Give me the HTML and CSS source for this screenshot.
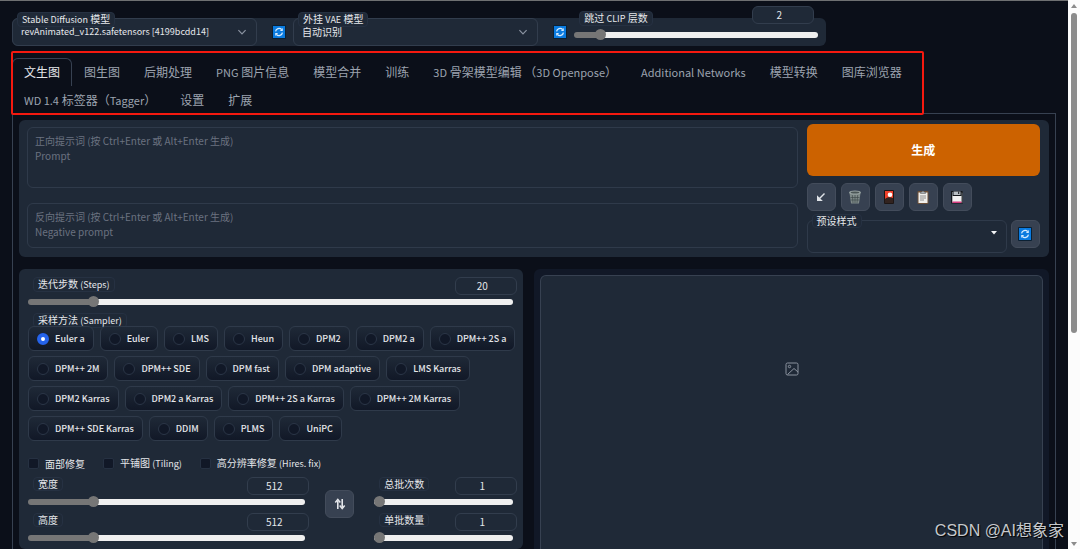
FILE: index.html
```
<!DOCTYPE html>
<html lang="zh-CN">
<head>
    <meta charset="UTF-8">
    <meta name="viewport" content="width=device-width, initial-scale=1.0">
    <link rel="stylesheet" href="styles.css">
    <title>Stable Diffusion</title>
</head>
<body>
    <svg class="defs" width="0" height="0">
        <symbol id="refresh" viewBox="0 0 14 14">
            <rect x="0" y="0" width="14" height="14" rx="1" fill="#0b2033"/>
            <rect x="1" y="1" width="12" height="12" fill="#0a7be0"/>
            <path d="M3.6 6.4a3.5 3.5 0 0 1 6-1.9M10.4 7.6a3.5 3.5 0 0 1-6 1.9" fill="none" stroke="#d5ecff" stroke-width="1.3"/>
            <path d="M10.8 3v3H7.9zM3.2 11V8h2.9z" fill="#d5ecff"/>
        </symbol>
        <symbol id="chevron" viewBox="0 0 10 10">
            <path d="M2 3.5l3 3 3-3" fill="none" stroke="#8b93a1" stroke-width="1"/>
        </symbol>
    </svg>

    <div class="app">
        <div class="toolbar">
            <div class="field">
                <label class="tag" for="model"><span class="latin">Stable Diffusion</span> 模型</label>
                <select id="model" class="latin">
                    <option>revAnimated_v122.safetensors [4199bcdd14]</option>
                </select>
                <svg class="chevron"><use href="#chevron"/></svg>
            </div>
            <button class="plain" aria-label="刷新模型"><svg><use href="#refresh"/></svg></button>
            <div class="field">
                <label class="tag" for="vae">外挂 <span class="latin">VAE</span> 模型</label>
                <select id="vae">
                    <option>自动识别</option>
                </select>
                <svg class="chevron"><use href="#chevron"/></svg>
            </div>
            <button class="plain" aria-label="刷新 VAE"><svg><use href="#refresh"/></svg></button>
            <div class="slider clip">
                <div class="slider-head">
                    <label class="tag" for="clip">跳过 <span class="latin">CLIP</span> 层数</label>
                    <input class="number" type="text" value="2" aria-label="跳过 CLIP 层数">
                </div>
                <input id="clip" type="range" min="1" max="12" value="2" style="--fill: 10%">
            </div>
        </div>

        <nav class="tabs">
            <button class="tab active">文生图</button>
            <button class="tab">图生图</button>
            <button class="tab">后期处理</button>
            <button class="tab"><span class="latin">PNG</span> 图片信息</button>
            <button class="tab">模型合并</button>
            <button class="tab">训练</button>
            <button class="tab"><span class="latin">3D</span> 骨架模型编辑 （<span class="latin">3D Openpose</span>）</button>
            <button class="tab"><span class="latin">Additional Networks</span></button>
            <button class="tab">模型转换</button>
            <button class="tab">图库浏览器</button>
            <button class="tab"><span class="latin">WD 1.4</span> 标签器（<span class="latin">Tagger</span>）</button>
            <button class="tab">设置</button>
            <button class="tab">扩展</button>
        </nav>

        <main class="content">
            <section class="block prompt-block">
                <div class="prompts">
                    <textarea class="prompt" aria-label="正向提示词" placeholder="正向提示词 (按 Ctrl+Enter 或 Alt+Enter 生成)&#10;Prompt"></textarea>
                    <textarea class="prompt negative" aria-label="反向提示词" placeholder="反向提示词 (按 Ctrl+Enter 或 Alt+Enter 生成)&#10;Negative prompt"></textarea>
                </div>
                <div class="actions">
                    <button class="generate">生成</button>
                    <div class="tools">
                        <button class="tool" aria-label="读取参数">
                            <svg viewBox="0 0 14 14"><path d="M10.5 3.5L5 9" stroke="#dfe3e8" stroke-width="1.5"/><path d="M3 5.2V11h5.8z" fill="#dfe3e8"/></svg>
                        </button>
                        <button class="tool" aria-label="清空">
                            <svg viewBox="0 0 14 14"><path d="M1.500 3h11l-1.500 10.500H3z" fill="#7f8a89"/><path d="M4.300 5l.7 8M7 5v8M9.700 5l-.7 8M2.500 7.500h9M2.800 10h8.400" stroke="#414b4c" stroke-width=".7"/><ellipse cx="7" cy="2.500" rx="6" ry="2" fill="#98a3a2"/><ellipse cx="7" cy="2.500" rx="4.300" ry="1" fill="#4b5656"/></svg>
                        </button>
                        <button class="tool" aria-label="附加网络">
                            <svg viewBox="0 0 14 14"><rect x="2" y="0" width="10" height="14" rx="1" fill="#1d1615"/><rect x="3" y="1" width="8" height="12" fill="#f0402a"/><path d="M3 9c2-2 5-2 8-1v5H3z" fill="#32231f"/><circle cx="8" cy="4.800" r="2.300" fill="#fff"/></svg>
                        </button>
                        <button class="tool" aria-label="粘贴样式">
                            <svg viewBox="0 0 14 14"><rect x="1.500" y="1" width="11" height="13" rx="1" fill="#6e5138"/><rect x="2.500" y="2.500" width="9" height="10.500" fill="#f0efec"/><path d="M4.500 3.500V2H6a1 1 0 0 1 2 0h1.500v1.500z" fill="#a9b0b5" stroke="#555" stroke-width=".5"/><path d="M4 6h6M4 8h6M4 10h4" stroke="#777" stroke-width=".8"/></svg>
                        </button>
                        <button class="tool" aria-label="保存样式">
                            <svg viewBox="0 0 14 14"><path d="M1 1h11l1 1v11.500H1z" fill="#14171b"/><path d="M2 2h1v11H2zM11.500 2.500h1V13h-1z" fill="#6b7278"/><path d="M3.500 1.500h7V5h-7z" fill="#b9bfc4"/><path d="M8 1.500h1.300V4H8z" fill="#30353a"/><path d="M2.500 6h9v6h-9z" fill="#f2f2f2"/><path d="M2.500 11.500h9V13h-9z" fill="#d53a7e"/></svg>
                        </button>
                    </div>
                    <div class="style-row">
                        <div class="field styles">
                            <label class="tag" for="preset">预设样式</label>
                            <select id="preset"><option></option></select>
                            <svg class="caret" viewBox="0 0 6 4"><path d="M0 0h6L3 3.500z" fill="#f3f4f6"/></svg>
                        </div>
                        <button class="tool" aria-label="刷新样式"><svg><use href="#refresh"/></svg></button>
                    </div>
                </div>
            </section>

            <div class="workspace">
                <section class="block settings">
                    <div class="slider">
                        <div class="slider-head">
                            <label class="tag" for="steps">迭代步数 <span class="latin">(Steps)</span></label>
                            <input class="number" type="text" value="20" aria-label="迭代步数">
                        </div>
                        <input id="steps" type="range" min="1" max="150" value="20" style="--fill: 13%">
                    </div>

                    <fieldset class="sampler">
                        <legend class="tag">采样方法 <span class="latin">(Sampler)</span></legend>
                        <div class="chips">
                            <label class="chip"><input type="radio" name="sampler" checked>Euler a</label>
                            <label class="chip"><input type="radio" name="sampler">Euler</label>
                            <label class="chip"><input type="radio" name="sampler">LMS</label>
                            <label class="chip"><input type="radio" name="sampler">Heun</label>
                            <label class="chip"><input type="radio" name="sampler">DPM2</label>
                            <label class="chip"><input type="radio" name="sampler">DPM2 a</label>
                            <label class="chip"><input type="radio" name="sampler">DPM++ 2S a</label>
                            <label class="chip"><input type="radio" name="sampler">DPM++ 2M</label>
                            <label class="chip"><input type="radio" name="sampler">DPM++ SDE</label>
                            <label class="chip"><input type="radio" name="sampler">DPM fast</label>
                            <label class="chip"><input type="radio" name="sampler">DPM adaptive</label>
                            <label class="chip"><input type="radio" name="sampler">LMS Karras</label>
                            <label class="chip"><input type="radio" name="sampler">DPM2 Karras</label>
                            <label class="chip"><input type="radio" name="sampler">DPM2 a Karras</label>
                            <label class="chip"><input type="radio" name="sampler">DPM++ 2S a Karras</label>
                            <label class="chip"><input type="radio" name="sampler">DPM++ 2M Karras</label>
                            <label class="chip"><input type="radio" name="sampler">DPM++ SDE Karras</label>
                            <label class="chip"><input type="radio" name="sampler">DDIM</label>
                            <label class="chip"><input type="radio" name="sampler">PLMS</label>
                            <label class="chip"><input type="radio" name="sampler">UniPC</label>
                        </div>
                    </fieldset>

                    <div class="checks">
                        <label class="check"><input type="checkbox"><span>面部修复</span></label>
                        <label class="check"><input type="checkbox"><span>平铺图 <span class="latin">(Tiling)</span></span></label>
                        <label class="check"><input type="checkbox"><span>高分辨率修复 <span class="latin">(Hires. fix)</span></span></label>
                    </div>

                    <div class="dimensions">
                        <div class="stack">
                            <div class="slider">
                                <div class="slider-head">
                                    <label class="tag" for="width">宽度</label>
                                    <input class="number" type="text" value="512" aria-label="宽度">
                                </div>
                                <input id="width" type="range" min="64" max="2048" value="512" style="--fill: 23%">
                            </div>
                            <div class="slider">
                                <div class="slider-head">
                                    <label class="tag" for="height">高度</label>
                                    <input class="number" type="text" value="512" aria-label="高度">
                                </div>
                                <input id="height" type="range" min="64" max="2048" value="512" style="--fill: 23%">
                            </div>
                        </div>
                        <button class="tool swap" aria-label="交换宽高">
                            <svg viewBox="0 0 14 14"><path d="M4.800 12V4M9.200 2v8" stroke="#e5e7eb" stroke-width="1.600"/><path d="M2.300 5.500L4.800 2.500l2.500 3M6.700 8.500l2.500 3 2.500-3" fill="none" stroke="#e5e7eb" stroke-width="1.500"/></svg>
                        </button>
                        <div class="stack">
                            <div class="slider">
                                <div class="slider-head">
                                    <label class="tag" for="count">总批次数</label>
                                    <input class="number" type="text" value="1" aria-label="总批次数">
                                </div>
                                <input id="count" type="range" min="1" max="100" value="1" style="--fill: 0%">
                            </div>
                            <div class="slider">
                                <div class="slider-head">
                                    <label class="tag" for="size">单批数量</label>
                                    <input class="number" type="text" value="1" aria-label="单批数量">
                                </div>
                                <input id="size" type="range" min="1" max="8" value="1" style="--fill: 0%">
                            </div>
                        </div>
                    </div>
                </section>

                <section class="output">
                    <div class="gallery">
                        <div class="empty">
                            <svg viewBox="0 0 14 14" fill="none" stroke="#8b939f"><rect x="1" y="1" width="12" height="12" rx="1.500"/><circle cx="4.500" cy="4.500" r="1.200"/><path d="M2.500 12.500l6.500-6 4 3.500"/></svg>
                        </div>
                    </div>
                </section>
            </div>
        </main>
    </div>

    <div class="scrollbar">
        <span class="arrow up"></span>
        <span class="thumb"></span>
        <span class="arrow down"></span>
    </div>

    <div class="watermark">CSDN @AI想象家</div>
</body>
</html>
```
FILE: styles.css
```
*{
    margin: 0;
    padding: 0;
    box-sizing: border-box;
}

body{
    display: flex;
    position: relative;
    height: 100vh;
    overflow: hidden;
    background: #0b0f19;
    color: #e5e7eb;
    font-family: "Noto Sans CJK SC", "Noto Sans", sans-serif;
    font-size: 10px;
    line-height: 12px;
}
button, input, select, textarea{
    font: inherit;
    color: inherit;
    border: none;
    outline: none;
    background: none;
}
button{
    cursor: pointer;
}
.latin{
    font-size: 9px;
}
.defs{
    position: absolute;
}
.app{
    flex: 1;
    min-width: 0;
    display: flex;
    flex-direction: column;
    padding: 17px 12px 0;
    border-top: 1px solid #6f7072;
}

/* top bar */
.toolbar{
    display: grid;
    grid-template-columns: 35fr 36px 35fr 36px 36fr;
    width: 78%;
    height: 28px;
    border-radius: 6px;
    background: #1f2937;
}
.field{
    position: relative;
    border: 1px solid #323d4d;
    border-radius: 6px;
}
.field select{
    display: block;
    width: 100%;
    height: 100%;
    padding: 0 24px 0 8px;
    appearance: none;
}
.tag{
    padding: 0 4px;
    border: 1px solid #263142;
    border-radius: 4px;
    background: #1f2937;
    white-space: nowrap;
}
.field .tag{
    position: absolute;
    left: 4px;
    top: -7px;
}
.chevron{
    position: absolute;
    right: 8px;
    top: 7px;
    width: 12px;
    height: 12px;
}
.plain{
    display: flex;
    align-items: center;
    justify-content: center;
    padding-left: 8px;
}
.plain svg{
    width: 14px;
    height: 14px;
}

/* sliders */
.slider{
    display: flex;
    flex-direction: column;
    gap: 1px;
}
.slider-head{
    display: flex;
    justify-content: space-between;
    align-items: flex-start;
    padding-left: 5px;
}
.number{
    width: 62px;
    height: 18px;
    padding: 0 8px 2px 0;
    border: 1px solid #323d4d;
    border-radius: 6px;
    background: #1f2937;
    text-align: center;
}
input[type="range"]{
    width: calc(100% - 4px);
    height: 11px;
    appearance: none;
}
input[type="range"]::-webkit-slider-runnable-track{
    height: 6px;
    border-radius: 3px;
    background: linear-gradient(to right, #767676 var(--fill), #efefef var(--fill));
}
input[type="range"]::-webkit-slider-thumb{
    appearance: none;
    width: 11px;
    height: 11px;
    margin-top: -3px;
    border-radius: 50%;
    background: #767676;
}
.clip{
    margin-top: -12px;
    padding-right: 8px;
    gap: 3px;
}
.clip .slider-head{
    padding-right: 4px;
}
.clip .slider-head .tag{
    margin-top: 5px;
}
.clip input[type="range"]{
    width: 100%;
}

/* tabs */
.tabs{
    position: relative;
    z-index: 1;
    display: flex;
    flex-wrap: wrap;
    max-width: 911px;
    margin: 6px 0 -1px;
    padding-top: 6px;
    outline: 2px solid #f5190f;
    outline-offset: -1px;
    border-radius: 1px;
}
.tab{
    height: 28px;
    padding: 0 11px 2px;
    border: 1px solid transparent;
    border-bottom: none;
    border-radius: 6px 6px 0 0;
    color: #9ca3af;
    font-size: 12px;
    white-space: nowrap;
}
.tab .latin{
    font-size: 11px;
}
.tab.active{
    border-color: #374151;
    color: #e5e7eb;
}

.content{
    flex: 1;
    display: flex;
    flex-direction: column;
    gap: 12px;
    padding: 6px 6px 0;
    border: 1px solid #374151;
    border-bottom: none;
}
.block{
    border-radius: 6px;
    background: #1f2937;
}

/* prompts */
.prompt-block{
    display: grid;
    grid-template-columns: 33fr 10fr;
    gap: 9px;
    padding: 4px 9px 4px 8px;
}
.prompts{
    display: flex;
    flex-direction: column;
    gap: 15px;
    padding-top: 3px;
}
.prompt{
    display: block;
    width: 100%;
    height: 61px;
    padding: 5px 7px;
    border: 1px solid #2f3a4a;
    border-radius: 6px;
    line-height: 15px;
    resize: none;
}
.prompt.negative{
    height: 45px;
}
.prompt::placeholder{
    color: #6b7280;
}
.actions{
    display: flex;
    flex-direction: column;
}
.generate{
    height: 52px;
    border-radius: 6px;
    background: #cc6200;
    color: #fff;
    font-size: 12px;
    font-weight: bold;
}
.tools{
    display: flex;
    gap: 5px;
    margin: 7px 0 9px;
}
.tool{
    display: flex;
    align-items: center;
    justify-content: center;
    width: 29px;
    height: 28px;
    border: 1px solid #434c5b;
    border-radius: 6px;
    background: #374151;
}
.tool svg{
    width: 14px;
    height: 14px;
}
.style-row{
    display: flex;
    gap: 4px;
}
.styles{
    flex: 1;
    height: 33px;
    border-color: #2f3a4a;
}
.caret{
    position: absolute;
    right: 9px;
    top: 10px;
    width: 6px;
    height: 4px;
}

/* generation settings */
.workspace{
    flex: 1;
    display: grid;
    grid-template-columns: 49fr 50fr;
    gap: 11px;
}
.settings{
    padding: 8px 6px 0 9px;
}
.sampler{
    border: none;
    margin-top: 6px;
}
.sampler legend{
    margin: 0 0 -2px 5px;
}
.chips{
    display: flex;
    flex-wrap: wrap;
    gap: 5px 6px;
}
.chip{
    display: flex;
    align-items: center;
    gap: 6px;
    height: 25px;
    padding: 0 8px;
    border: 1px solid #2f3a4a;
    border-radius: 6px;
    background: linear-gradient(#1f2937, #111827);
    font-size: 9px;
    font-weight: 500;
    white-space: nowrap;
}
.chip input{
    width: 12px;
    height: 12px;
    appearance: none;
    border: 1px solid #2b3647;
    border-radius: 50%;
    background: #111827;
}
.chip input:checked{
    border: 4px solid #2563eb;
    background: #fff;
}
.checks{
    display: flex;
    gap: 18px;
    margin: 16px 0 7px;
}
.check{
    display: flex;
    align-items: center;
    gap: 6px;
}
.check input{
    width: 11px;
    height: 11px;
    appearance: none;
    border: 1px solid #263142;
    border-radius: 2px;
    background: #111827;
}
.dimensions{
    display: grid;
    grid-template-columns: 57fr auto 29fr;
}
.stack{
    display: flex;
    flex-direction: column;
    gap: 6px;
}
.swap{
    margin: 13px 20px 0 16px;
}

/* output */
.output{
    padding: 6px 6px 0;
    border-radius: 6px 6px 0 0;
    background: #111827;
}
.gallery{
    height: 100%;
    border: 1px solid #374151;
    border-bottom: none;
    border-radius: 6px 6px 0 0;
    background: #1f2937;
}
.empty{
    display: flex;
    align-items: center;
    justify-content: center;
    height: 186px;
}
.empty svg{
    width: 14px;
    height: 14px;
}

.scrollbar{
    display: flex;
    flex-direction: column;
    align-items: center;
    width: 12px;
    padding: 4px 0 3px;
    background: #fcfcfc;
}
.arrow{
    border: 3px solid transparent;
}
.arrow.up{
    border-top: none;
    border-bottom: 4px solid #8b8b8b;
}
.arrow.down{
    margin-top: auto;
    border-bottom: none;
    border-top: 4px solid #8b8b8b;
}
.thumb{
    width: 6px;
    height: 59%;
    margin-top: 5px;
    border-radius: 3px;
    background: #8b8b8b;
}

.watermark{
    position: absolute;
    right: 16px;
    bottom: 6px;
    color: #c6c9cd;
    font-family: "Liberation Sans", "Noto Sans CJK SC", sans-serif;
    font-size: 16px;
    line-height: 24px;
    text-shadow: 1px 1px 1px #000;
}
```
